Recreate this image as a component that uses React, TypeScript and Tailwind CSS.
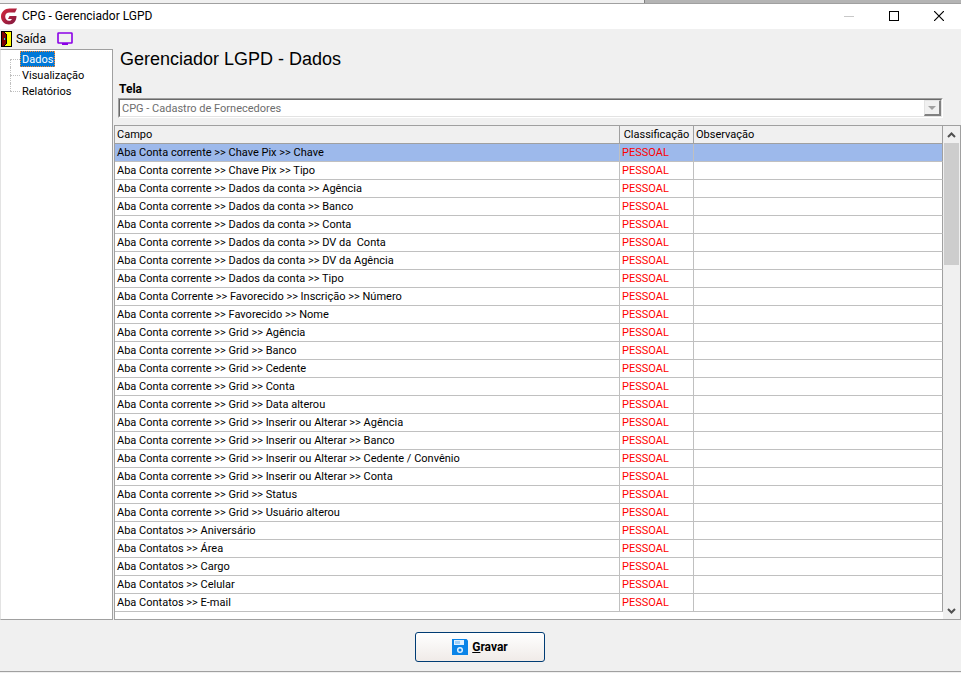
import { useState } from "react";

const menuItems = ["Dados", "Visualização", "Relatórios"];

const campos = [
    "Aba Conta corrente >> Chave Pix >> Chave",
    "Aba Conta corrente >> Chave Pix >> Tipo",
    "Aba Conta corrente >> Dados da conta >> Agência",
    "Aba Conta corrente >> Dados da conta >> Banco",
    "Aba Conta corrente >> Dados da conta >> Conta",
    "Aba Conta corrente >> Dados da conta >> DV da  Conta",
    "Aba Conta corrente >> Dados da conta >> DV da Agência",
    "Aba Conta corrente >> Dados da conta >> Tipo",
    "Aba Conta Corrente >> Favorecido >> Inscrição >> Número",
    "Aba Conta corrente >> Favorecido >> Nome",
    "Aba Conta corrente >> Grid >> Agência",
    "Aba Conta corrente >> Grid >> Banco",
    "Aba Conta corrente >> Grid >> Cedente",
    "Aba Conta corrente >> Grid >> Conta",
    "Aba Conta corrente >> Grid >> Data alterou",
    "Aba Conta corrente >> Grid >> Inserir ou Alterar >> Agência",
    "Aba Conta corrente >> Grid >> Inserir ou Alterar >> Banco",
    "Aba Conta corrente >> Grid >> Inserir ou Alterar >> Cedente / Convênio",
    "Aba Conta corrente >> Grid >> Inserir ou Alterar >> Conta",
    "Aba Conta corrente >> Grid >> Status",
    "Aba Conta corrente >> Grid >> Usuário alterou",
    "Aba Contatos >> Aniversário",
    "Aba Contatos >> Área",
    "Aba Contatos >> Cargo",
    "Aba Contatos >> Celular",
    "Aba Contatos >> E-mail",
];

function TitleBar() {
    return (
        <header className="flex h-[25px] items-center bg-white pb-px pl-px">
            <svg width="17" height="17" viewBox="0 0 17 17">
                <defs>
                    <linearGradient id="logo" x1="0" y1="0" x2="1" y2="1">
                        <stop offset="0" stopColor="#d8283c" />
                        <stop offset="1" stopColor="#7c1840" />
                    </linearGradient>
                </defs>
                <path
                    d="M16 0.5H8.5C4 0.5 0 4 0 8.5C0 13 3.5 16.5 8 16.5C12.5 16.5 15.5 13 15.5 8H8.5L7 11H11C10.3 12.3 9.3 12.8 8 12.8C5.7 12.8 4.2 11 4.2 8.6C4.2 6 6 4.5 8.5 4.5H14Z"
                    fill="url(#logo)"
                />
            </svg>
            <span className="ml-1 flex-1 text-xs text-black">CPG - Gerenciador LGPD</span>
            <div className="flex h-full">
                <button aria-label="Minimizar" className="flex w-[45px] items-center justify-center">
                    <svg width="10" height="10" viewBox="0 0 10 10" shapeRendering="crispEdges">
                        <path d="M0 5h10v1H0z" fill="#c8c8c8" />
                    </svg>
                </button>
                <button aria-label="Maximizar" className="flex w-[45px] items-center justify-center">
                    <svg width="10" height="10" viewBox="0 0 10 10">
                        <rect x="0.5" y="0.5" width="9" height="9" fill="none" stroke="#000" />
                    </svg>
                </button>
                <button aria-label="Fechar" className="flex w-[45px] items-center justify-center">
                    <svg width="10" height="10" viewBox="0 0 10 10">
                        <path d="M0 0l10 10M10 0L0 10" stroke="#000" strokeWidth="1.2" />
                    </svg>
                </button>
            </div>
        </header>
    );
}

function Toolbar() {
    return (
        <div className="flex h-5 items-center text-xs text-black">
            <button className="flex items-center">
                <svg width="12" height="16" viewBox="0 0 12 16" shapeRendering="crispEdges">
                    <path d="M1 0h11v16H1z" fill="#000" />
                    <path d="M4 1h7v14H4z" fill="#ffff00" />
                    <path d="M2 1h2v1h1v1h1v10H5v1H4v1H2z" fill="#800000" />
                    <path d="M4 1h1v1h1v1h1v10H6v1H5v1H4v-1h1v-1h1V3H5V2H4z" fill="#000" />
                    <path d="M4 7h1v2H4z" fill="#00e0e0" />
                </svg>
                <span className="ml-1">Saída</span>
            </button>
            <button aria-label="Monitor" className="ml-[11px]">
                <svg width="16" height="14" viewBox="0 0 16 14">
                    <rect x="1" y="1" width="14" height="10" rx="0.5" fill="none" stroke="#8a00e6" strokeWidth="1.6" />
                    <path d="M5 11h6v2H5z" fill="#8a00e6" />
                </svg>
            </button>
        </div>
    );
}

function Sidebar({ active, onSelect }: { active: string; onSelect: (item: string) => void }) {
    return (
        <nav className="w-[113px] shrink-0 border border-[#a0a0a0] border-l-[#e3e3e3] bg-white pt-px pl-[9px]">
            <ul>
                {menuItems.map((item, i) => (
                    <li key={item} className="flex h-4">
                        <span className="flex w-[10px] flex-col">
                            <span className={i === 0 ? "h-2" : "h-2 border-l border-dotted border-[#c0c0c0]"} />
                            <span
                                className={
                                    i === menuItems.length - 1
                                        ? "h-2 border-t border-dotted border-[#c0c0c0]"
                                        : "h-2 border-t border-l border-dotted border-[#c0c0c0]"
                                }
                            />
                        </span>
                        <button
                            onClick={() => onSelect(item)}
                            className={
                                item === active
                                    ? "border border-dotted border-[#ff8728] bg-[#0078d7] px-px leading-none text-white"
                                    : "px-[2px] leading-none text-black"
                            }
                        >
                            {item}
                        </button>
                    </li>
                ))}
            </ul>
        </nav>
    );
}

function DataGrid() {
    const [selected, setSelected] = useState(0);

    return (
        <div className="flex flex-1 border border-[#a0a0a0] bg-white">
            <div className="flex-1">
                <table className="w-full table-fixed border-separate border-spacing-0 text-left leading-4 text-black">
                    <colgroup>
                        <col />
                        <col className="w-[74px]" />
                        <col className="w-[249px]" />
                    </colgroup>
                    <thead>
                        <tr className="h-[18px] bg-[#f0f0f0]">
                            <th className="border-r border-b border-[#a0a0a0] p-0 pt-px pl-[2px] font-normal">Campo</th>
                            <th className="border-r border-b border-[#a0a0a0] p-0 pt-px text-center font-normal">Classificação</th>
                            <th className="border-r border-b border-[#a0a0a0] p-0 pt-px pl-[2px] font-normal">Observação</th>
                        </tr>
                    </thead>
                    <tbody>
                        {campos.map((campo, i) => (
                            <tr
                                key={campo}
                                onClick={() => setSelected(i)}
                                className={i === selected ? "h-[18px] bg-[#9db9eb]" : "h-[18px]"}
                            >
                                <td className="border-r border-b border-[#c0c0c0] p-0 pt-px pl-[2px] whitespace-pre">{campo}</td>
                                <td className="border-r border-b border-[#c0c0c0] p-0 pt-px pl-[2px] text-[#ff0000]">PESSOAL</td>
                                <td className="border-r border-b border-[#c0c0c0] border-r-[#a0a0a0] p-0" />
                            </tr>
                        ))}
                    </tbody>
                </table>
            </div>
            <div className="flex w-[17px] flex-col items-center bg-[#f0f0f0]">
                <button aria-label="Rolar para cima" className="flex h-[17px] w-full items-center justify-center">
                    <svg width="9" height="6" viewBox="0 0 9 6">
                        <path d="M1 5L4.5 1.5L8 5" fill="none" stroke="#505050" strokeWidth="2" />
                    </svg>
                </button>
                <div className="h-[122px] w-[15px] bg-[#cdcdcd]" />
                <div className="flex-1" />
                <button aria-label="Rolar para baixo" className="flex h-[17px] w-full items-center justify-center">
                    <svg width="9" height="6" viewBox="0 0 9 6">
                        <path d="M1 1L4.5 4.5L8 1" fill="none" stroke="#505050" strokeWidth="2" />
                    </svg>
                </button>
            </div>
        </div>
    );
}

export default function App() {
    const [active, setActive] = useState("Dados");

    return (
        <div className="flex min-h-screen flex-col bg-[#f0f0f0] font-[Roboto,sans-serif] text-[11px]">
            <div className="flex h-1 border-b border-[#a0a0a0]">
                <div className="flex-1 basis-[645px] border-r border-[#808080] bg-[#f0f0f0]" />
                <div className="flex-1 basis-[316px] bg-[#b4b4b4]" />
            </div>
            <TitleBar />
            <Toolbar />
            <div className="flex flex-1">
                <Sidebar active={active} onSelect={setActive} />
                <main className="ml-px flex flex-1 flex-col">
                    <div className="flex flex-col pr-[18px] pb-[7px] pl-1">
                        <h1 className="pl-[2px] font-['Liberation_Sans',Arial,sans-serif] text-lg leading-5 text-black">
                            Gerenciador LGPD - Dados
                        </h1>
                        <label htmlFor="tela" className="mt-3 pl-px text-xs leading-4 font-bold text-black">
                            Tela
                        </label>
                        <div className="mt-px border border-[#a0a0a0] border-r-white border-b-white">
                            <div className="flex h-[18px] border border-[#696969] border-r-[#e3e3e3] border-b-[#e3e3e3] bg-white">
                                <select
                                    id="tela"
                                    disabled
                                    className="w-full appearance-none bg-white pt-[2px] pl-[2px] leading-[14px] text-[#6d6d6d]"
                                >
                                    <option>CPG - Cadastro de Fornecedores</option>
                                </select>
                                <span className="flex h-4 w-[17px] shrink-0 items-center justify-center border border-r-2 border-b-2 border-[#e3e3e3] border-r-[#808080] border-b-[#808080] bg-[#f0f0f0]">
                                    <svg width="8" height="4" viewBox="0 0 8 4">
                                        <path d="M0 0h8L4 4z" fill="#a0a0a0" />
                                    </svg>
                                </span>
                            </div>
                        </div>
                    </div>
                    <DataGrid />
                </main>
            </div>
            <footer className="mb-px flex h-[52px] items-start justify-center border-b border-[#a0a0a0] pt-3 pr-px">
                <button className="flex h-[30px] w-[130px] items-center justify-center gap-1 rounded-[3px] border border-[#003c74] bg-linear-to-b from-white to-[#f0ebe8] text-xs font-bold text-black">
                    <svg width="16" height="16" viewBox="0 0 16 16">
                        <path d="M0 0h14.5L16 1.5V16H0z" fill="#0a84e8" />
                        <path d="M2 1h10v5H2z" fill="#dff0ff" />
                        <path d="M3 2h5v3H3z" fill="#0a84e8" opacity="0.3" />
                        <circle cx="8" cy="11" r="2.3" fill="none" stroke="#dff0ff" strokeWidth="1.5" />
                    </svg>
                    <span>
                        <u>G</u>ravar
                    </span>
                </button>
            </footer>
        </div>
    );
}
